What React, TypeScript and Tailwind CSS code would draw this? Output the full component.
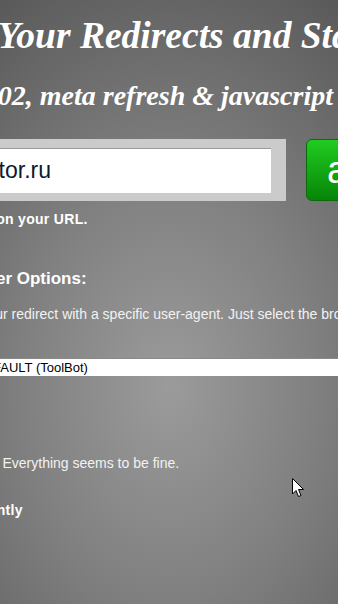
export default function App() {
  return (
    <div className="relative h-[604px] w-[338px] overflow-hidden bg-[radial-gradient(ellipse_100%_80%_at_50%_64%,#9b9b9b_0%,#7f7f7f_45%,#555555_100%)] font-['Liberation_Sans',Arial,sans-serif] text-white">
      <h1 className="-ml-[109px] mt-[13px] whitespace-nowrap font-['Liberation_Serif','Times_New_Roman',serif] text-[37.5px] font-bold italic leading-[46px]">
        Check Your Redirects and Statuscode
      </h1>
      <h2 className="-ml-[80px] mt-[20px] whitespace-nowrap font-['Liberation_Serif','Times_New_Roman',serif] text-[28px] font-bold italic leading-[33px]">
        301 / 302, meta refresh &amp; javascript redirects
      </h2>

      <div className="mt-[27px] flex items-stretch gap-[20px] whitespace-nowrap">
        <div className="-ml-[400px] flex h-[62px] w-[686px] shrink-0 items-center bg-[#cbcbcb] pl-[8px] pr-[15px]">
          <div className="flex h-[45px] w-full items-center justify-end border-t border-t-[#9a9a9a] bg-white pr-[220px] text-[23px] text-[#0b1a33]">
            https://www.example-mirror-tor.ru
          </div>
        </div>
        <div className="flex h-[62px] shrink-0 items-center rounded-[6px] border border-[#0c6a0c] bg-[linear-gradient(#20cc20,#078507)] pl-[20px] pr-[20px] text-[38px] text-white">
          analyse
        </div>
      </div>

      <p className="-ml-[267px] mt-[10px] whitespace-nowrap text-[14px] font-bold leading-[17px] tracking-[0.3px]">
        Checks the status code and redirects on your URL.
      </p>

      <h3 className="-ml-[56px] mt-[41px] whitespace-nowrap text-[17px] font-bold leading-[20px]">
        Browser Options:
      </h3>
      <p className="-ml-[114px] mt-[17px] whitespace-nowrap text-[14px] leading-[17px] text-[#f2f2f2]">
        You can check your redirect with a specific user-agent. Just select the browser from the list.
      </p>

      <div className="-ml-[27px] mt-[35px] flex h-[18px] w-[400px] items-center border-t border-t-[#8a8a8a] bg-white pl-[2px] text-[13px] text-black">
        DEFAULT (ToolBot)
      </div>

      <p className="-ml-[45px] mt-[79px] whitespace-nowrap text-[14px] leading-[17px] text-[#f2f2f2]">
        Result: Everything seems to be fine.
      </p>
      <p className="-ml-[143px] mt-[30px] whitespace-nowrap text-[14px] font-bold leading-[17px] tracking-[0.3px]">
        301 Moved Permanently
      </p>

      <svg
        className="absolute left-[292px] top-[478px]"
        width="13"
        height="20"
        viewBox="0 0 13 20"
      >
        <path
          d="M0.5 0.5 L0.5 16 L4 12.5 L6.5 18.5 L9 17.5 L6.5 11.5 L11.5 11.5 Z"
          fill="#fff"
          stroke="#000"
          strokeWidth="1"
        />
      </svg>
    </div>
  );
}
